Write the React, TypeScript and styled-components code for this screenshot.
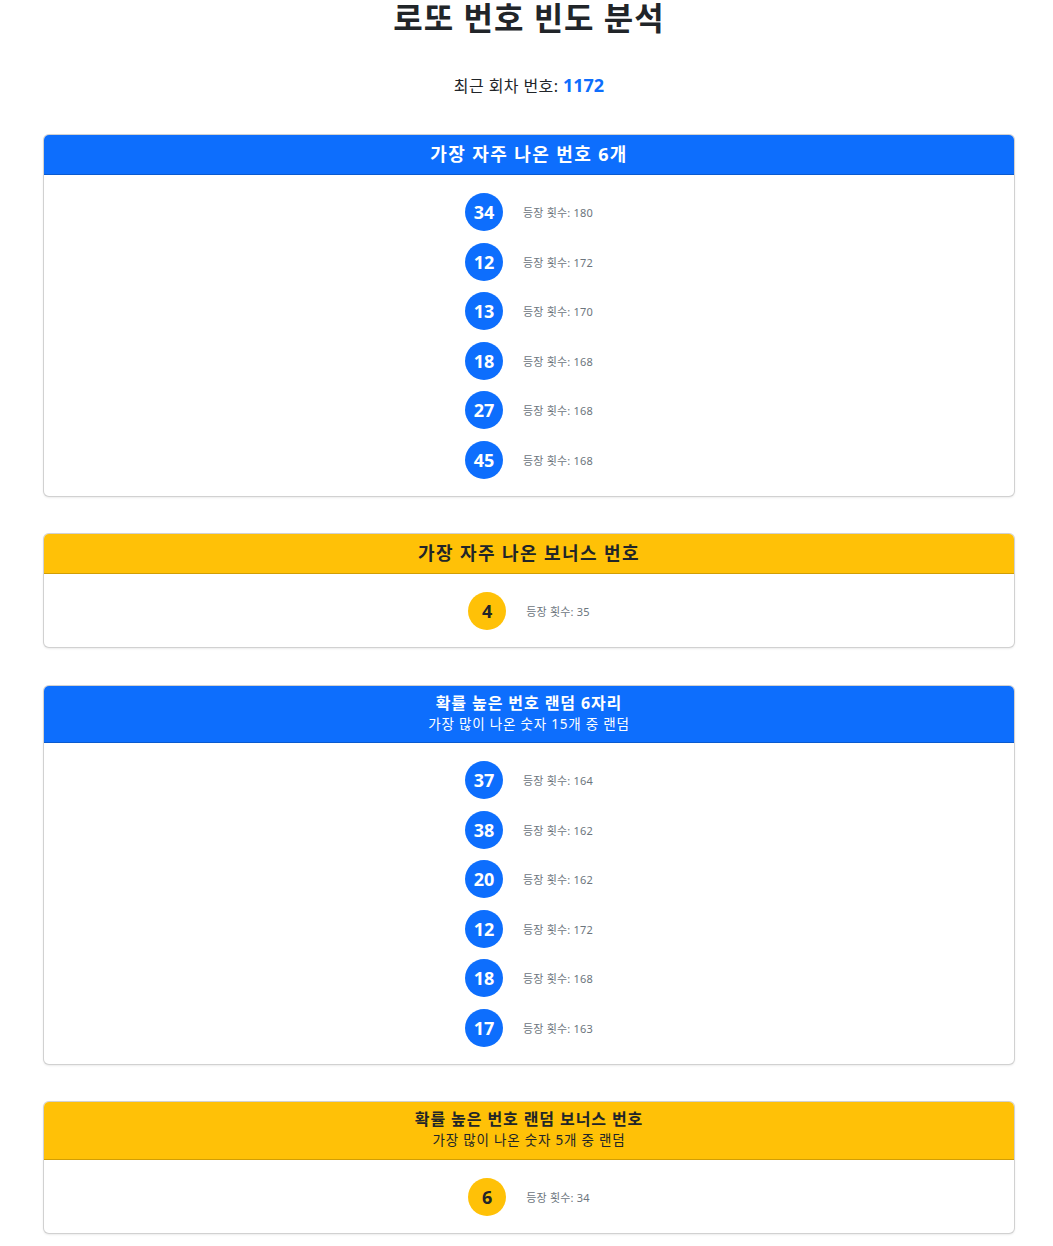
import React from "react";
import styled, { createGlobalStyle } from "styled-components";

const Global = createGlobalStyle`
  html, body { margin: 0; padding: 0; background: #fff; }
  body {
    font-family: "Noto Sans", "Noto Sans CJK KR", sans-serif;
    color: #212529;
  }
`;

const Page = styled.div`
  width: 972px;
  margin: 0 0 0 43px;
  display: flex;
  flex-direction: column;
  align-items: stretch;
  padding-bottom: 12px;
`;

const Title = styled.h1`
  margin: 0;
  font-size: 32px;
  font-weight: 700;
  line-height: 36px;
  text-align: center;
  letter-spacing: 1px;
`;

const Latest = styled.p`
  margin: 37px 0 0;
  text-align: center;
  font-size: 16px;
  line-height: 24px;
  letter-spacing: 0.4px;
`;

const LatestNum = styled.span`
  color: #0d6efd;
  font-weight: 700;
  font-size: 18px;
  letter-spacing: 0;
`;

const Cards = styled.div`
  margin-top: 36px;
  display: flex;
  flex-direction: column;
  gap: 36.5px;
`;

const Card = styled.section`
  border: 1px solid rgba(0, 0, 0, 0.18);
  border-radius: 6px;
  overflow: hidden;
  box-shadow: 0 1px 2px rgba(0, 0, 0, 0.08);
  background: #fff;
`;

const Header = styled.div<{ $variant: "blue" | "yellow" }>`
  background: ${(p) => (p.$variant === "blue" ? "#0d6efd" : "#ffc107")};
  color: ${(p) => (p.$variant === "blue" ? "#fff" : "#212529")};
  border-bottom: 1px solid rgba(0, 0, 0, 0.18);
  text-align: center;
  padding: 7px 16px;
  min-height: 25px;
`;

const HeaderTitle = styled.div<{ $size: number }>`
  font-size: ${(p) => p.$size}px;
  font-weight: 700;
  line-height: ${(p) => (p.$size > 17 ? 25 : 21)}px;
  letter-spacing: ${(p) => (p.$size > 17 ? 1.4 : 0.9)}px;
`;

const HeaderSub = styled.div`
  font-size: 13.5px;
  line-height: 21.5px;
  letter-spacing: 0.8px;
`;

const Body = styled.div`
  padding: 18px 16px 17px;
  display: flex;
  flex-direction: column;
  align-items: center;
  gap: 11.5px;
`;

const Row = styled.div`
  display: flex;
  align-items: center;
  gap: 20px;
`;

const Ball = styled.div<{ $variant: "blue" | "yellow" }>`
  width: 38px;
  height: 38px;
  border-radius: 50%;
  background: ${(p) => (p.$variant === "blue" ? "#0d6efd" : "#ffc107")};
  color: ${(p) => (p.$variant === "blue" ? "#fff" : "#212529")};
  display: flex;
  align-items: center;
  justify-content: center;
  font-weight: 700;
  font-size: 18px;
`;

const Count = styled.span`
  font-size: 11px;
  color: #6c757d;
  letter-spacing: 0.2px;
`;

type Item = [number, number];

const Section = ({
  variant,
  title,
  sub,
  items,
}: {
  variant: "blue" | "yellow";
  title: string;
  sub?: string;
  items: Item[];
}) => (
  <Card>
    <Header $variant={variant}>
      <HeaderTitle $size={sub ? 16 : 18}>{title}</HeaderTitle>
      {sub && <HeaderSub>{sub}</HeaderSub>}
    </Header>
    <Body>
      {items.map(([n, c], i) => (
        <Row key={i}>
          <Ball $variant={variant}>{n}</Ball>
          <Count>등장 횟수: {c}</Count>
        </Row>
      ))}
    </Body>
  </Card>
);

export default function App() {
  return (
    <>
      <Global />
      <Page>
        <Title>로또 번호 빈도 분석</Title>
        <Latest>
          최근 회차 번호: <LatestNum>1172</LatestNum>
        </Latest>
        <Cards>
          <Section
            variant="blue"
            title="가장 자주 나온 번호 6개"
            items={[
              [34, 180],
              [12, 172],
              [13, 170],
              [18, 168],
              [27, 168],
              [45, 168],
            ]}
          />
          <Section variant="yellow" title="가장 자주 나온 보너스 번호" items={[[4, 35]]} />
          <Section
            variant="blue"
            title="확률 높은 번호 랜덤 6자리"
            sub="가장 많이 나온 숫자 15개 중 랜덤"
            items={[
              [37, 164],
              [38, 162],
              [20, 162],
              [12, 172],
              [18, 168],
              [17, 163],
            ]}
          />
          <Section
            variant="yellow"
            title="확률 높은 번호 랜덤 보너스 번호"
            sub="가장 많이 나온 숫자 5개 중 랜덤"
            items={[[6, 34]]}
          />
        </Cards>
      </Page>
    </>
  );
}
